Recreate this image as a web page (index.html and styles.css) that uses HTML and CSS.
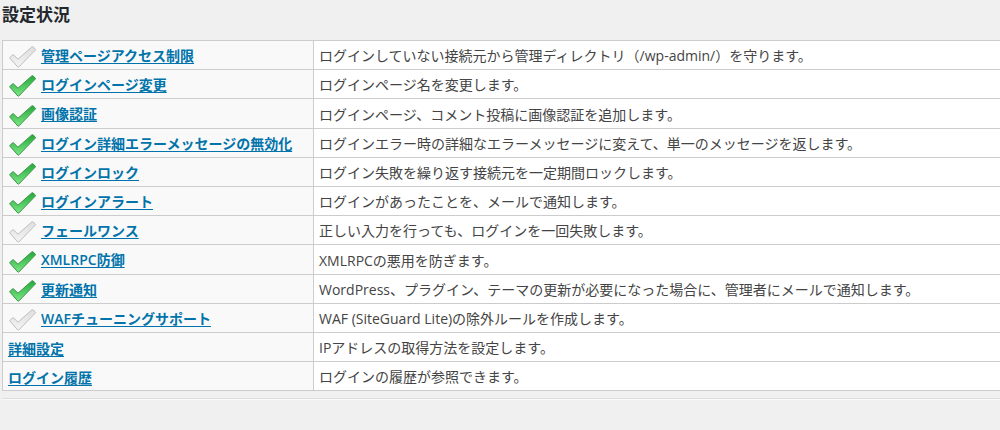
FILE: index.html
```
<!DOCTYPE html>
<html lang="ja">
<head>
<meta charset="utf-8">
<title>設定状況</title>
<link rel="stylesheet" href="styles.css">
</head>
<body>
<svg class="defs" aria-hidden="true">
  <defs>
    <linearGradient id="green" x1="0" y1="0" x2="0" y2="1"><stop offset="0" stop-color="#25a83a"/><stop offset="1" stop-color="#7be884"/></linearGradient>
    <linearGradient id="gray" x1="0" y1="0" x2="0" y2="1"><stop offset="0" stop-color="#dedede"/><stop offset="1" stop-color="#f4f4f4"/></linearGradient>
    <path id="check" d="M.6 11.8 L3.6 8.8 Q4 8.4 4.5 8.9 L9 13.2 L22.8 .9 Q23.4 .4 24 .9 L26.3 3 Q26.8 3.5 26.3 4.1 L9.8 21 Q9.3 21.5 8.8 21 Z" stroke-width="1" stroke-linejoin="round"/>
  </defs>
</svg>
<main class="page">
  <h3 class="title">設定状況</h3>
  <table class="status">
    <tr><th class="name" scope="row"><svg class="icon off" role="img" aria-label="無効"><use href="#check"/></svg><a href="#">管理ページアクセス制限</a></th><td class="desc">ログインしていない接続元から管理ディレクトリ（/wp-admin/）を守ります。</td></tr>
    <tr><th class="name" scope="row"><svg class="icon on" role="img" aria-label="有効"><use href="#check"/></svg><a href="#">ログインページ変更</a></th><td class="desc">ログインページ名を変更します。</td></tr>
    <tr><th class="name" scope="row"><svg class="icon on" role="img" aria-label="有効"><use href="#check"/></svg><a href="#">画像認証</a></th><td class="desc">ログインページ、コメント投稿に画像認証を追加します。</td></tr>
    <tr><th class="name" scope="row"><svg class="icon on" role="img" aria-label="有効"><use href="#check"/></svg><a href="#">ログイン詳細エラーメッセージの無効化</a></th><td class="desc">ログインエラー時の詳細なエラーメッセージに変えて、単一のメッセージを返します。</td></tr>
    <tr><th class="name" scope="row"><svg class="icon on" role="img" aria-label="有効"><use href="#check"/></svg><a href="#">ログインロック</a></th><td class="desc">ログイン失敗を繰り返す接続元を一定期間ロックします。</td></tr>
    <tr><th class="name" scope="row"><svg class="icon on" role="img" aria-label="有効"><use href="#check"/></svg><a href="#">ログインアラート</a></th><td class="desc">ログインがあったことを、メールで通知します。</td></tr>
    <tr><th class="name" scope="row"><svg class="icon off" role="img" aria-label="無効"><use href="#check"/></svg><a href="#">フェールワンス</a></th><td class="desc">正しい入力を行っても、ログインを一回失敗します。</td></tr>
    <tr><th class="name" scope="row"><svg class="icon on" role="img" aria-label="有効"><use href="#check"/></svg><a href="#">XMLRPC防御</a></th><td class="desc">XMLRPCの悪用を防ぎます。</td></tr>
    <tr><th class="name" scope="row"><svg class="icon on" role="img" aria-label="有効"><use href="#check"/></svg><a href="#">更新通知</a></th><td class="desc">WordPress、プラグイン、テーマの更新が必要になった場合に、管理者にメールで通知します。</td></tr>
    <tr><th class="name" scope="row"><svg class="icon off" role="img" aria-label="無効"><use href="#check"/></svg><a href="#">WAFチューニングサポート</a></th><td class="desc">WAF (SiteGuard Lite)の除外ルールを作成します。</td></tr>
    <tr><th class="name" scope="row"><a href="#">詳細設定</a></th><td class="desc">IPアドレスの取得方法を設定します。</td></tr>
    <tr><th class="name" scope="row"><a href="#">ログイン履歴</a></th><td class="desc">ログインの履歴が参照できます。</td></tr>
  </table>
  <hr class="rule">
</main>
</body>
</html>
```
FILE: styles.css
```
body {
  margin: 0;
  background: #f0f0f0;
  color: #444;
  font: 14px/20px "Open Sans", "Noto Sans CJK JP", sans-serif;
}
.defs { position: absolute; width: 0; height: 0; }
.page { padding: 5px 0 0 2px; }
.title {
  margin: 0 0 15px;
  color: #23282d;
  font-size: 17px;
  line-height: 20px;
  font-weight: 700;
}
.status {
  width: 100%;
  border-collapse: collapse;
  border: 1px solid #ccc;
  border-right: 0;
  background: #fff;
}
.status tr { height: 29px; }
.status tr:nth-child(5n+3) { height: 30px; }
.name, .desc {
  border: 1px solid #ccc;
  border-right: 0;
  padding: 2px 5px 0;
  text-align: left;
  white-space: nowrap;
}
.name {
  width: 300px;
  padding-top: 4px;
  background: #f9f9f9;
  font-weight: 600;
}
.name a { color: #0073aa; text-underline-offset: 2px; }
.icon {
  width: 27px;
  height: 22px;
  margin: 0 5px 0 1px;
  vertical-align: middle;
}
.on { fill: url(#green); stroke: #3d9449; }
.off { fill: url(#gray); stroke: #bdbdbd; }
.rule {
  margin: 7px 0 0;
  border: 0;
  border-top: 1px solid #ddd;
  border-bottom: 1px solid #fafafa;
}
```
